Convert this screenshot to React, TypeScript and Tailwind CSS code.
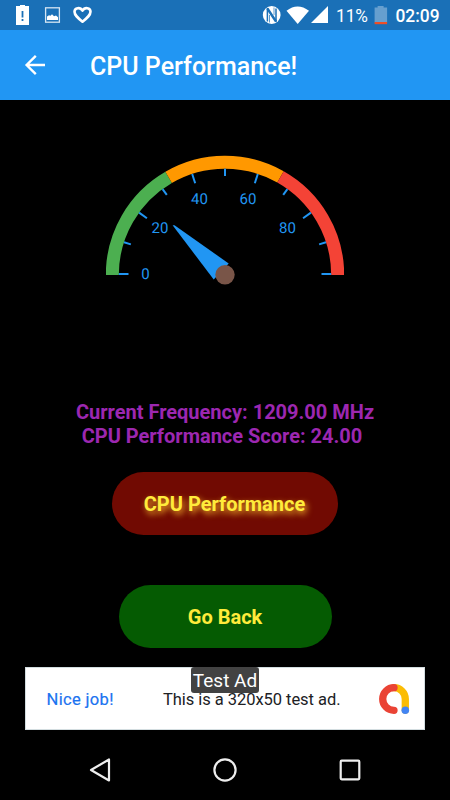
const polar = (r: number, deg: number) => {
  const a = (deg * Math.PI) / 180;
  return [119 - r * Math.cos(a), 120 - r * Math.sin(a)];
};

function Arc({ from, to, color }: { from: number; to: number; color: string }) {
  const [x1, y1] = polar(112.7, from);
  const [x2, y2] = polar(112.7, to);
  return <path d={`M${x1} ${y1}A112.7 112.7 0 0 1 ${x2} ${y2}`} fill="none" stroke={color} strokeWidth="13" />;
}

function Gauge() {
  const labels: [string, number, number][] = [
    ['0', 39.5, 124],
    ['20', 54, 77.7],
    ['40', 93.5, 49],
    ['60', 142, 49],
    ['80', 181.5, 77.7],
  ];
  return (
    <svg className="block" width="238" height="130" viewBox="0 0 238 130">
      <Arc from={0} to={60} color="#4caf50" />
      <Arc from={60} to={119.5} color="#ff9800" />
      <Arc from={119.5} to={180} color="#f44336" />
      {Array.from({ length: 11 }, (_, i) => {
        const [x1, y1] = polar(106.2, i * 18);
        const [x2, y2] = polar(i % 2 ? 99 : 96.5, i * 18);
        const dy = i % 10 === 0 ? -1 : 0;
        return <line key={i} x1={x1} y1={y1 + dy} x2={x2} y2={y2 + dy} stroke="#2196f3" strokeWidth="2" />;
      })}
      <g fill="#2196f3" fontFamily="Roboto, sans-serif" fontSize="15" textAnchor="middle">
        {labels.map(([t, x, y]) => (
          <text key={t} x={x} y={y} textRendering="geometricPrecision">{t}</text>
        ))}
      </g>
      <path d="M66.6 70.2L68.5 70.2L122.7 108.5L107.7 124.5Z" fill="#2196f3" />
      <circle cx="119" cy="119.8" r="9.7" fill="#795548" />
    </svg>
  );
}

function StatusBar() {
  return (
    <div className="flex h-[30px] items-center bg-[#1a70b7] text-white">
      <svg width="450" height="30" viewBox="0 0 450 30" className="block shrink-0">
        <path fill="#fff" fillRule="evenodd" d="M16 6H20V5h5v1h4v19H16V6ZM21.6 11v6.5h1.8V11ZM21.6 19v2h1.8v-2Z" />
        <rect x="45.6" y="7.8" width="13.8" height="14.4" fill="none" stroke="#d5e5f3" strokeWidth="1.3" />
        <path fill="#fff" d="M47 20v-3.500l2-1.200 1.500.4 1.500-1.500 2 2 2-.6 2 1.600V20Z" />
        <path d="M82.5 21.7C78 18 74.5 15.2 74.5 11.8c0-4.2 5.7-5 8-1.2 2.3-3.8 8-3 8 1.2 0 3.4-3.5 6.2-8 9.9Z" fill="none" stroke="#fff" strokeWidth="2.6" strokeLinejoin="round" />
        <circle cx="271.7" cy="15" r="8.9" fill="#fff" />
        <path d="M267.400 8V21.500M276 8.500V22" stroke="#1a70b7" strokeWidth="1.500" />
        <path d="M267.400 8.500L276 21.500" stroke="#1a70b7" strokeWidth="2.400" />
        <path d="M269.500 15V22.500M274 7.500V15" stroke="#1a70b7" strokeWidth=".7" />
        <path d="M286.5 10.8Q297.5 2 309 10.8L297.7 24Z" fill="#fff" />
        <path d="M328 6v17h-17Z" fill="#fff" />
        <path d="M374.6 7.5h3V6h6v1.5h3.5v15h-12.5Z" fill="#669fcf" />
        <rect x="374.6" y="22" width="12.5" height="2.2" fill="#ed4e26" />
        <g fill="#fff" fontFamily="Roboto, sans-serif">
          <text x="336" y="22" fontSize="18" textLength="32" lengthAdjust="spacingAndGlyphs">11%</text>
          <text x="395.5" y="22" fontSize="18" fontWeight="500" textLength="44" lengthAdjust="spacingAndGlyphs">02:09</text>
        </g>
      </svg>
    </div>
  );
}

export default function App() {
  return (
    <div className="flex h-[800px] w-[450px] flex-col overflow-hidden bg-black font-[Roboto,sans-serif]">
      <StatusBar />
      <header className="flex h-[70px] shrink-0 items-center bg-[#2196f3] pl-6 text-white">
        <svg width="22" height="22" viewBox="0 0 22 22" fill="none" stroke="currentColor" strokeWidth="2.4">
          <path d="M21 11H3M11.8 1.8L2.6 11l9.2 9.2" />
        </svg>
        <h1 className="ml-11 mt-[3px] whitespace-nowrap text-[25px] font-medium leading-[30px]">CPU Performance!</h1>
      </header>
      <main className="flex flex-col items-center">
        <div className="mt-[55px]">
          <Gauge />
        </div>
        <div className="mt-[115px] text-center text-[20px] font-bold leading-6 text-[#9c27b0]">
          <p>Current Frequency: 1209.00 MHz</p>
          <p className="relative -left-[3px]">CPU Performance Score: 24.00</p>
        </div>
        <button className="mt-6 flex h-[63px] w-[226px] items-center justify-center rounded-full bg-[#710a02] pr-px text-[20px] font-bold text-[#ffeb3b] [text-shadow:2px_3px_6px_#ffc02f]">
          CPU Performance
        </button>
        <button className="mt-[50px] flex h-[63px] w-[213px] items-center justify-center rounded-full bg-[#055b02] text-[20px] font-bold text-[#ffeb3b]">
          Go Back
        </button>
        <div className="relative mt-[19px] flex h-[63px] w-[400px] items-center border border-[#d3dde0] bg-white">
          <svg className="block shrink-0" width="330" height="61" fontFamily="Roboto, sans-serif" fontSize="16.5">
            <text x="20.5" y="37" fill="#1a73f0" stroke="#1a73f0" strokeWidth=".2" textLength="67" lengthAdjust="spacing">Nice job!</text>
            <text x="137" y="37" fill="#202124" textLength="177.5" lengthAdjust="spacing">This is a 320x50 test ad.</text>
          </svg>
          <svg className="absolute left-[352px] top-[15px]" width="32" height="32" viewBox="0 0 32 32" fill="none" strokeWidth="7.3" strokeLinecap="round">
            <path d="M16 4.7A11.3 11.3 0 0 1 27.3 16V27" stroke="#fbbc04" />
            <path d="M16 4.7A11.3 11.3 0 0 0 16 27.3" stroke="#ea4335" />
            <circle cx="27.3" cy="27.2" r="3.8" fill="#4285f4" />
          </svg>
          <span className="absolute -top-px left-[165px] flex h-[26px] w-[68px] items-center justify-center whitespace-nowrap rounded-[3px] bg-[#424242] pt-[3px] text-[19px] text-white">
            Test Ad
          </span>
        </div>
      </main>
      <nav className="flex h-[80px] shrink-0 items-center justify-between px-[87px]">
        <svg width="26" height="26" viewBox="0 0 26 26" fill="none" stroke="#eee" strokeWidth="2.2" strokeLinejoin="round">
          <path d="M4 13L22 2.5V23.5Z" />
        </svg>
        <svg width="26" height="26" viewBox="0 0 26 26" fill="none" stroke="#eee" strokeWidth="2.2">
          <circle cx="13" cy="13" r="10.6" />
        </svg>
        <svg width="26" height="26" viewBox="0 0 26 26" fill="none" stroke="#eee" strokeWidth="2.2">
          <rect x="3.7" y="3.7" width="18.6" height="18.6" rx="1" />
        </svg>
      </nav>
    </div>
  );
}
